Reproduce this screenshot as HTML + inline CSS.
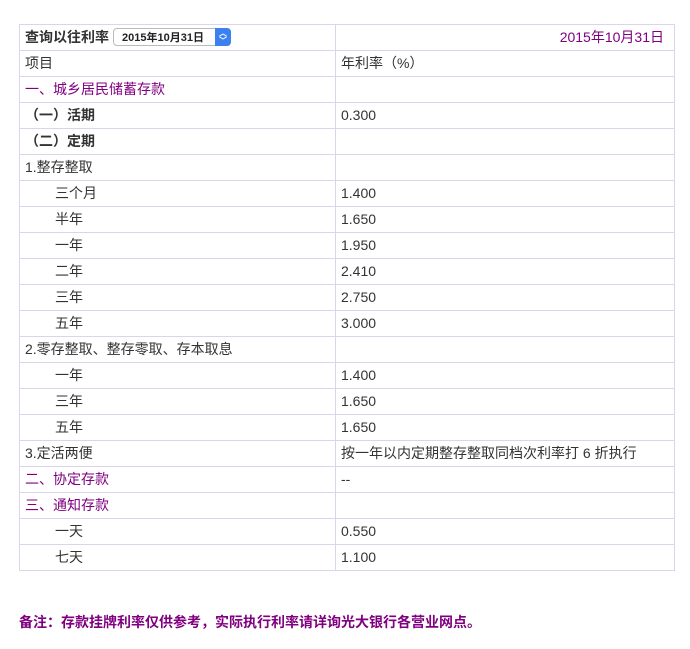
<!DOCTYPE html>
<html><head><meta charset="utf-8"><style>
html,body{margin:0;padding:0;background:#fff;width:690px;height:649px;overflow:hidden}
body{font-family:"Liberation Sans","Noto Sans CJK SC",sans-serif;font-size:14px;color:#333}
table{position:absolute;left:19px;top:24px;width:656px;border-collapse:collapse;table-layout:fixed}
td{border:1px solid #dcd3ec;height:25px;padding:0 0 0 5px;line-height:25px;white-space:nowrap;overflow:hidden}
td.l{width:310px}
.p{color:#800080}
.b{font-weight:bold}
.i{padding-left:35px}
.sel{display:inline-block;vertical-align:middle;position:relative;width:118px;height:18px;border:1px solid #bbb;border-radius:4px;font-size:11px;line-height:18px;padding-left:8px;box-sizing:border-box;margin-left:4px;margin-top:-3px;color:#222;background:#fff}
.sel span{position:absolute;right:-1px;top:-1px;width:16px;height:18px;background:#3b82f0;border-radius:0 4px 4px 0;color:#fff;font-size:8px;line-height:7px;text-align:center;padding-top:2px;box-sizing:border-box}
.note{position:absolute;left:19px;top:612px;font-size:14px;font-weight:bold;color:#800080}
</style></head><body>
<table>
<tr><td class="l b">查询以往利率<div class="sel">2015年10月31日<span>︿<br>﹀</span></div></td><td class="p" style="text-align:right;padding-right:10px">2015年10月31日</td></tr>
<tr><td class="l">项目</td><td>年利率（%）</td></tr>
<tr><td class="l p">一、城乡居民储蓄存款</td><td></td></tr>
<tr><td class="l b">（一）活期</td><td>0.300</td></tr>
<tr><td class="l b">（二）定期</td><td></td></tr>
<tr><td class="l">1.整存整取</td><td></td></tr>
<tr><td class="l i">三个月</td><td>1.400</td></tr>
<tr><td class="l i">半年</td><td>1.650</td></tr>
<tr><td class="l i">一年</td><td>1.950</td></tr>
<tr><td class="l i">二年</td><td>2.410</td></tr>
<tr><td class="l i">三年</td><td>2.750</td></tr>
<tr><td class="l i">五年</td><td>3.000</td></tr>
<tr><td class="l">2.零存整取、整存零取、存本取息</td><td></td></tr>
<tr><td class="l i">一年</td><td>1.400</td></tr>
<tr><td class="l i">三年</td><td>1.650</td></tr>
<tr><td class="l i">五年</td><td>1.650</td></tr>
<tr><td class="l">3.定活两便</td><td>按一年以内定期整存整取同档次利率打 6 折执行</td></tr>
<tr><td class="l p">二、协定存款</td><td>--</td></tr>
<tr><td class="l p">三、通知存款</td><td></td></tr>
<tr><td class="l i">一天</td><td>0.550</td></tr>
<tr><td class="l i">七天</td><td>1.100</td></tr>
</table>
<div class="note">备注：存款挂牌利率仅供参考，实际执行利率请详询光大银行各营业网点。</div>
</body></html>
